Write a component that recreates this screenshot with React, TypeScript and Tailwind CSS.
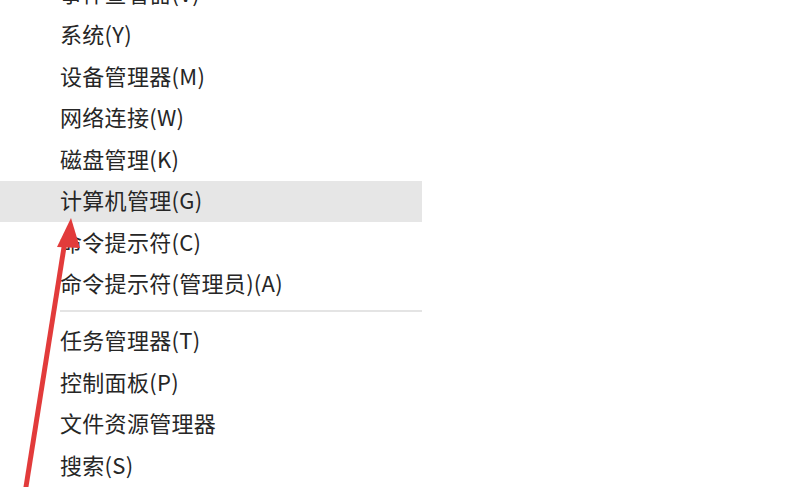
import React from 'react';

const groups: string[][] = [
  [
    '事件查看器(V)',
    '系统(Y)',
    '设备管理器(M)',
    '网络连接(W)',
    '磁盘管理(K)',
    '计算机管理(G)',
    '命令提示符(C)',
    '命令提示符(管理员)(A)',
  ],
  ['任务管理器(T)', '控制面板(P)', '文件资源管理器', '搜索(S)'],
];

const active = '计算机管理(G)';

export default function App() {
  return (
    <div
      className="relative w-[800px] h-[487px] overflow-hidden bg-white"
      style={{ fontFamily: '"Noto Sans CJK SC", "Noto Sans", sans-serif' }}
    >
      {/* MENU */}
      <div className="w-[422px] mt-[-27px] flex flex-col">
        {groups.map((items, g) => (
          <div key={g} className="flex flex-col">
            {g > 0 && (
              <div className="h-[15.5px] pt-[5px] pl-[60px]">
                <div className="h-[1.5px] bg-[#e4e4e4]" />
              </div>
            )}
            {items.map((item) => (
              <div
                key={item}
                className={`h-[41.5px] flex items-center pl-[60px] pb-[4px] text-[22px] tracking-[0.3px] leading-none text-[#262626] ${
                  item === active ? 'bg-[#e6e6e6]' : ''
                }`}
              >
                {item}
              </div>
            ))}
          </div>
        ))}
      </div>

      {/* red arrow overlay */}
      <svg
        className="absolute inset-0 pointer-events-none"
        width="800"
        height="487"
        viewBox="0 0 800 487"
      >
        <path d="M23 490 L62 244 L67 244 L28 490 Z" fill="#e23b3b" />
        <path d="M71 218 L57 247 L80 248 Z" fill="#e23b3b" />
      </svg>
    </div>
  );
}
